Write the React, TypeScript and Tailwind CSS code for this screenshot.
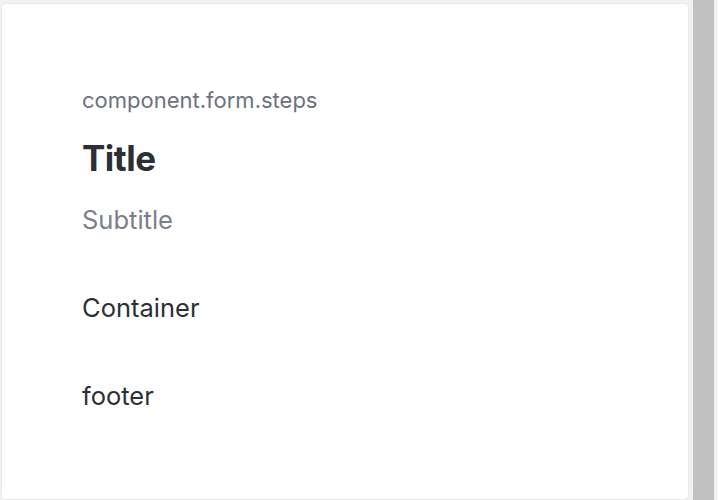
import React from 'react';

export default function App() {
  return (
    <div className="flex h-[500px] w-[718px] bg-[#f1f1f4] font-['Inter',sans-serif]">
      {/* Card */}
      <div className="ml-px mt-[3px] flex-1 rounded-[5px] border border-[#e7e7ec] bg-white px-[80px] pt-[81px]">
        <div className="text-[22px] leading-[30px] text-[#6b7280]">component.form.steps</div>
        <h1 className="mt-[21px] text-[35px] font-bold leading-[44px] tracking-[-0.5px] text-[#2b2f36]">Title</h1>
        <div className="mt-[22px] text-[25.5px] leading-[36px] text-[#7a808a]">Subtitle</div>
        <div className="mt-[52px] text-[25.5px] leading-[36px] text-[#2b2f36]">Container</div>
        <div className="mt-[52px] text-[25.5px] leading-[36px] text-[#2b2f36]">footer</div>
      </div>
      {/* Scrollbar */}
      <div className="flex w-[29px] bg-[#f1f1f1] pl-[4px] pr-[4px]">
        <div className="flex-1 bg-[#c1c1c1]" />
      </div>
    </div>
  );
}
